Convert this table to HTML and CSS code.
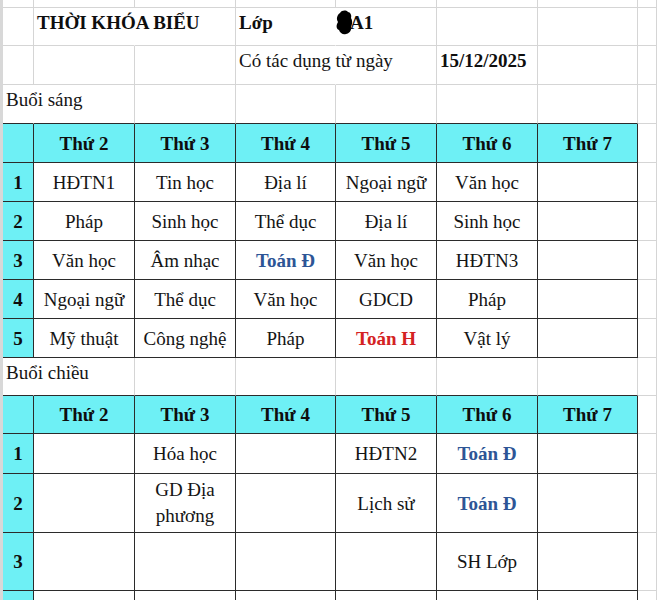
FILE: index.html
```html
<!DOCTYPE html>
<html lang="vi">
<head>
<meta charset="utf-8">
<title>Thời khóa biểu</title>
<link rel="stylesheet" href="styles.css">
</head>
<body>
<div class="sheet">
  <div class="row h8">
    <div class="strip"></div>
    <div class="cell wa"></div><div class="cell wb"></div><div class="cell wc"></div><div class="cell wd"></div>
    <div class="cell we"></div><div class="cell wf"></div><div class="cell wg"></div><div class="cell wh"></div>
  </div>
  <div class="row h38">
    <div class="strip"></div>
    <div class="cell wa"></div>
    <div class="cell wb top hide b">THỜI KHÓA BIỂU</div>
    <div class="cell wc"></div>
    <div class="cell wd top hide b">Lớp</div>
    <div class="cell we top b nopad"><svg class="blob" width="17" height="25" viewBox="0 0 17 25"><path d="M4 3 C6 0 10 0 12 2 C14 2 16 5 15 8 C17 11 16 15 15 17 C16 20 13 24 10 24 C7 25 4 23 3 20 C0 19 0 15 2 12 C0 9 1 5 4 3 Z" fill="#000"/></svg>A1</div>
    <div class="cell wf"></div><div class="cell wg"></div><div class="cell wh"></div>
  </div>
  <div class="row h39">
    <div class="strip"></div>
    <div class="cell wa"></div><div class="cell wb"></div><div class="cell wc"></div>
    <div class="cell wd top hide">Có tác dụng từ ngày</div>
    <div class="cell we"></div>
    <div class="cell wf top b">15/12/2025</div>
    <div class="cell wg"></div><div class="cell wh"></div>
  </div>
  <div class="row h39">
    <div class="strip"></div>
    <div class="cell wa top hide tb">Buổi sáng</div>
    <div class="cell wb tb"></div><div class="cell wc tb"></div><div class="cell wd tb"></div>
    <div class="cell we tb"></div><div class="cell wf tb"></div><div class="cell wg tb"></div><div class="cell wh"></div>
  </div>
  <div class="row h39">
    <div class="strip"></div>
    <div class="cell wa t hd"></div>
    <div class="cell wb t hd">Thứ 2</div><div class="cell wc t hd">Thứ 3</div><div class="cell wd t hd">Thứ 4</div>
    <div class="cell we t hd">Thứ 5</div><div class="cell wf t hd">Thứ 6</div><div class="cell wg t hd">Thứ 7</div>
    <div class="cell wh"></div>
  </div>
  <div class="row h39">
    <div class="strip"></div>
    <div class="cell wa t hd">1</div>
    <div class="cell wb t">HĐTN1</div><div class="cell wc t">Tin học</div><div class="cell wd t">Địa lí</div>
    <div class="cell we t">Ngoại ngữ</div><div class="cell wf t">Văn học</div><div class="cell wg t"></div>
    <div class="cell wh"></div>
  </div>
  <div class="row h39">
    <div class="strip"></div>
    <div class="cell wa t hd">2</div>
    <div class="cell wb t">Pháp</div><div class="cell wc t">Sinh học</div><div class="cell wd t">Thể dục</div>
    <div class="cell we t">Địa lí</div><div class="cell wf t">Sinh học</div><div class="cell wg t"></div>
    <div class="cell wh"></div>
  </div>
  <div class="row h39">
    <div class="strip"></div>
    <div class="cell wa t hd">3</div>
    <div class="cell wb t">Văn học</div><div class="cell wc t">Âm nhạc</div><div class="cell wd t blue">Toán Đ</div>
    <div class="cell we t">Văn học</div><div class="cell wf t">HĐTN3</div><div class="cell wg t"></div>
    <div class="cell wh"></div>
  </div>
  <div class="row h39">
    <div class="strip"></div>
    <div class="cell wa t hd">4</div>
    <div class="cell wb t">Ngoại ngữ</div><div class="cell wc t">Thể dục</div><div class="cell wd t">Văn học</div>
    <div class="cell we t">GDCD</div><div class="cell wf t">Pháp</div><div class="cell wg t"></div>
    <div class="cell wh"></div>
  </div>
  <div class="row h39">
    <div class="strip"></div>
    <div class="cell wa t hd">5</div>
    <div class="cell wb t">Mỹ thuật</div><div class="cell wc t">Công nghệ</div><div class="cell wd t">Pháp</div>
    <div class="cell we t red">Toán H</div><div class="cell wf t">Vật lý</div><div class="cell wg t"></div>
    <div class="cell wh"></div>
  </div>
  <div class="row h38">
    <div class="strip"></div>
    <div class="cell wa top hide tb">Buổi chiều</div>
    <div class="cell wb tb"></div><div class="cell wc tb"></div><div class="cell wd tb"></div>
    <div class="cell we tb"></div><div class="cell wf tb"></div><div class="cell wg tb"></div><div class="cell wh"></div>
  </div>
  <div class="row h38">
    <div class="strip"></div>
    <div class="cell wa t hd"></div>
    <div class="cell wb t hd">Thứ 2</div><div class="cell wc t hd">Thứ 3</div><div class="cell wd t hd">Thứ 4</div>
    <div class="cell we t hd">Thứ 5</div><div class="cell wf t hd">Thứ 6</div><div class="cell wg t hd">Thứ 7</div>
    <div class="cell wh"></div>
  </div>
  <div class="row h40">
    <div class="strip"></div>
    <div class="cell wa t hd">1</div>
    <div class="cell wb t"></div><div class="cell wc t">Hóa học</div><div class="cell wd t"></div>
    <div class="cell we t">HĐTN2</div><div class="cell wf t blue">Toán Đ</div><div class="cell wg t"></div>
    <div class="cell wh"></div>
  </div>
  <div class="row h59">
    <div class="strip"></div>
    <div class="cell wa t hd">2</div>
    <div class="cell wb t"></div><div class="cell wc t wrap">GD Địa<br>phương</div><div class="cell wd t"></div>
    <div class="cell we t">Lịch sử</div><div class="cell wf t blue">Toán Đ</div><div class="cell wg t"></div>
    <div class="cell wh"></div>
  </div>
  <div class="row h58">
    <div class="strip"></div>
    <div class="cell wa t hd">3</div>
    <div class="cell wb t"></div><div class="cell wc t"></div><div class="cell wd t"></div>
    <div class="cell we t"></div><div class="cell wf t">SH Lớp</div><div class="cell wg t"></div>
    <div class="cell wh"></div>
  </div>
  <div class="row h20">
    <div class="strip"></div>
    <div class="cell wa t hd"></div>
    <div class="cell wb t"></div><div class="cell wc t"></div><div class="cell wd t"></div>
    <div class="cell we t"></div><div class="cell wf t"></div><div class="cell wg t"></div>
    <div class="cell wh"></div>
  </div>
</div>
</body>
</html>
```

FILE: styles.css
```css
html, body {
  margin: 0;
  padding: 0;
  background: #ffffff;
}

body {
  font-family: "Liberation Serif", "Times New Roman", serif;
  font-size: 19px;
  color: #141414;
}

.sheet {
  width: 657px;
  height: 600px;
  overflow: hidden;
}

.row {
  display: flex;
}

.h8 { height: 8px; }
.h20 { height: 20px; }
.h38 { height: 38px; }
.h39 { height: 39px; }
.h40 { height: 40px; }
.h58 { height: 58px; }
.h59 { height: 59px; }

.strip {
  flex: none;
  width: 3px;
  background: #d8d8d8;
}

.cell {
  flex: none;
  box-sizing: border-box;
  border-right: 1px solid #d5d5d5;
  border-bottom: 1px solid #d5d5d5;
  display: flex;
  align-items: center;
  justify-content: center;
  white-space: nowrap;
  text-align: center;
  line-height: 21px;
}

.wa { width: 31px; }
.wb { width: 101px; }
.wc { width: 101px; }
.wd { width: 100px; }
.we { width: 101px; }
.wf { width: 101px; }
.wg { width: 100px; }
.wh { flex: 1 1 auto; }

.top {
  align-items: flex-start;
  justify-content: flex-start;
  padding-left: 3px;
  padding-top: 4px;
}

.nopad {
  padding-left: 0;
}

.hide {
  border-right-color: transparent;
}

.tb {
  border-bottom-color: #2b2b2b;
}

.t {
  border-right-color: #2b2b2b;
  border-bottom-color: #2b2b2b;
}

.hd {
  background: #6ef0f5;
  font-weight: bold;
  color: #0e0e0e;
}

.b {
  font-weight: bold;
  color: #0e0e0e;
}

.blue {
  color: #2d5596;
  font-weight: bold;
}

.red {
  color: #d42222;
  font-weight: bold;
}

.wrap {
  line-height: 26px;
}

.blob {
  display: block;
  margin-top: -2px;
  margin-left: 0;
  margin-right: -3px;
}
```
